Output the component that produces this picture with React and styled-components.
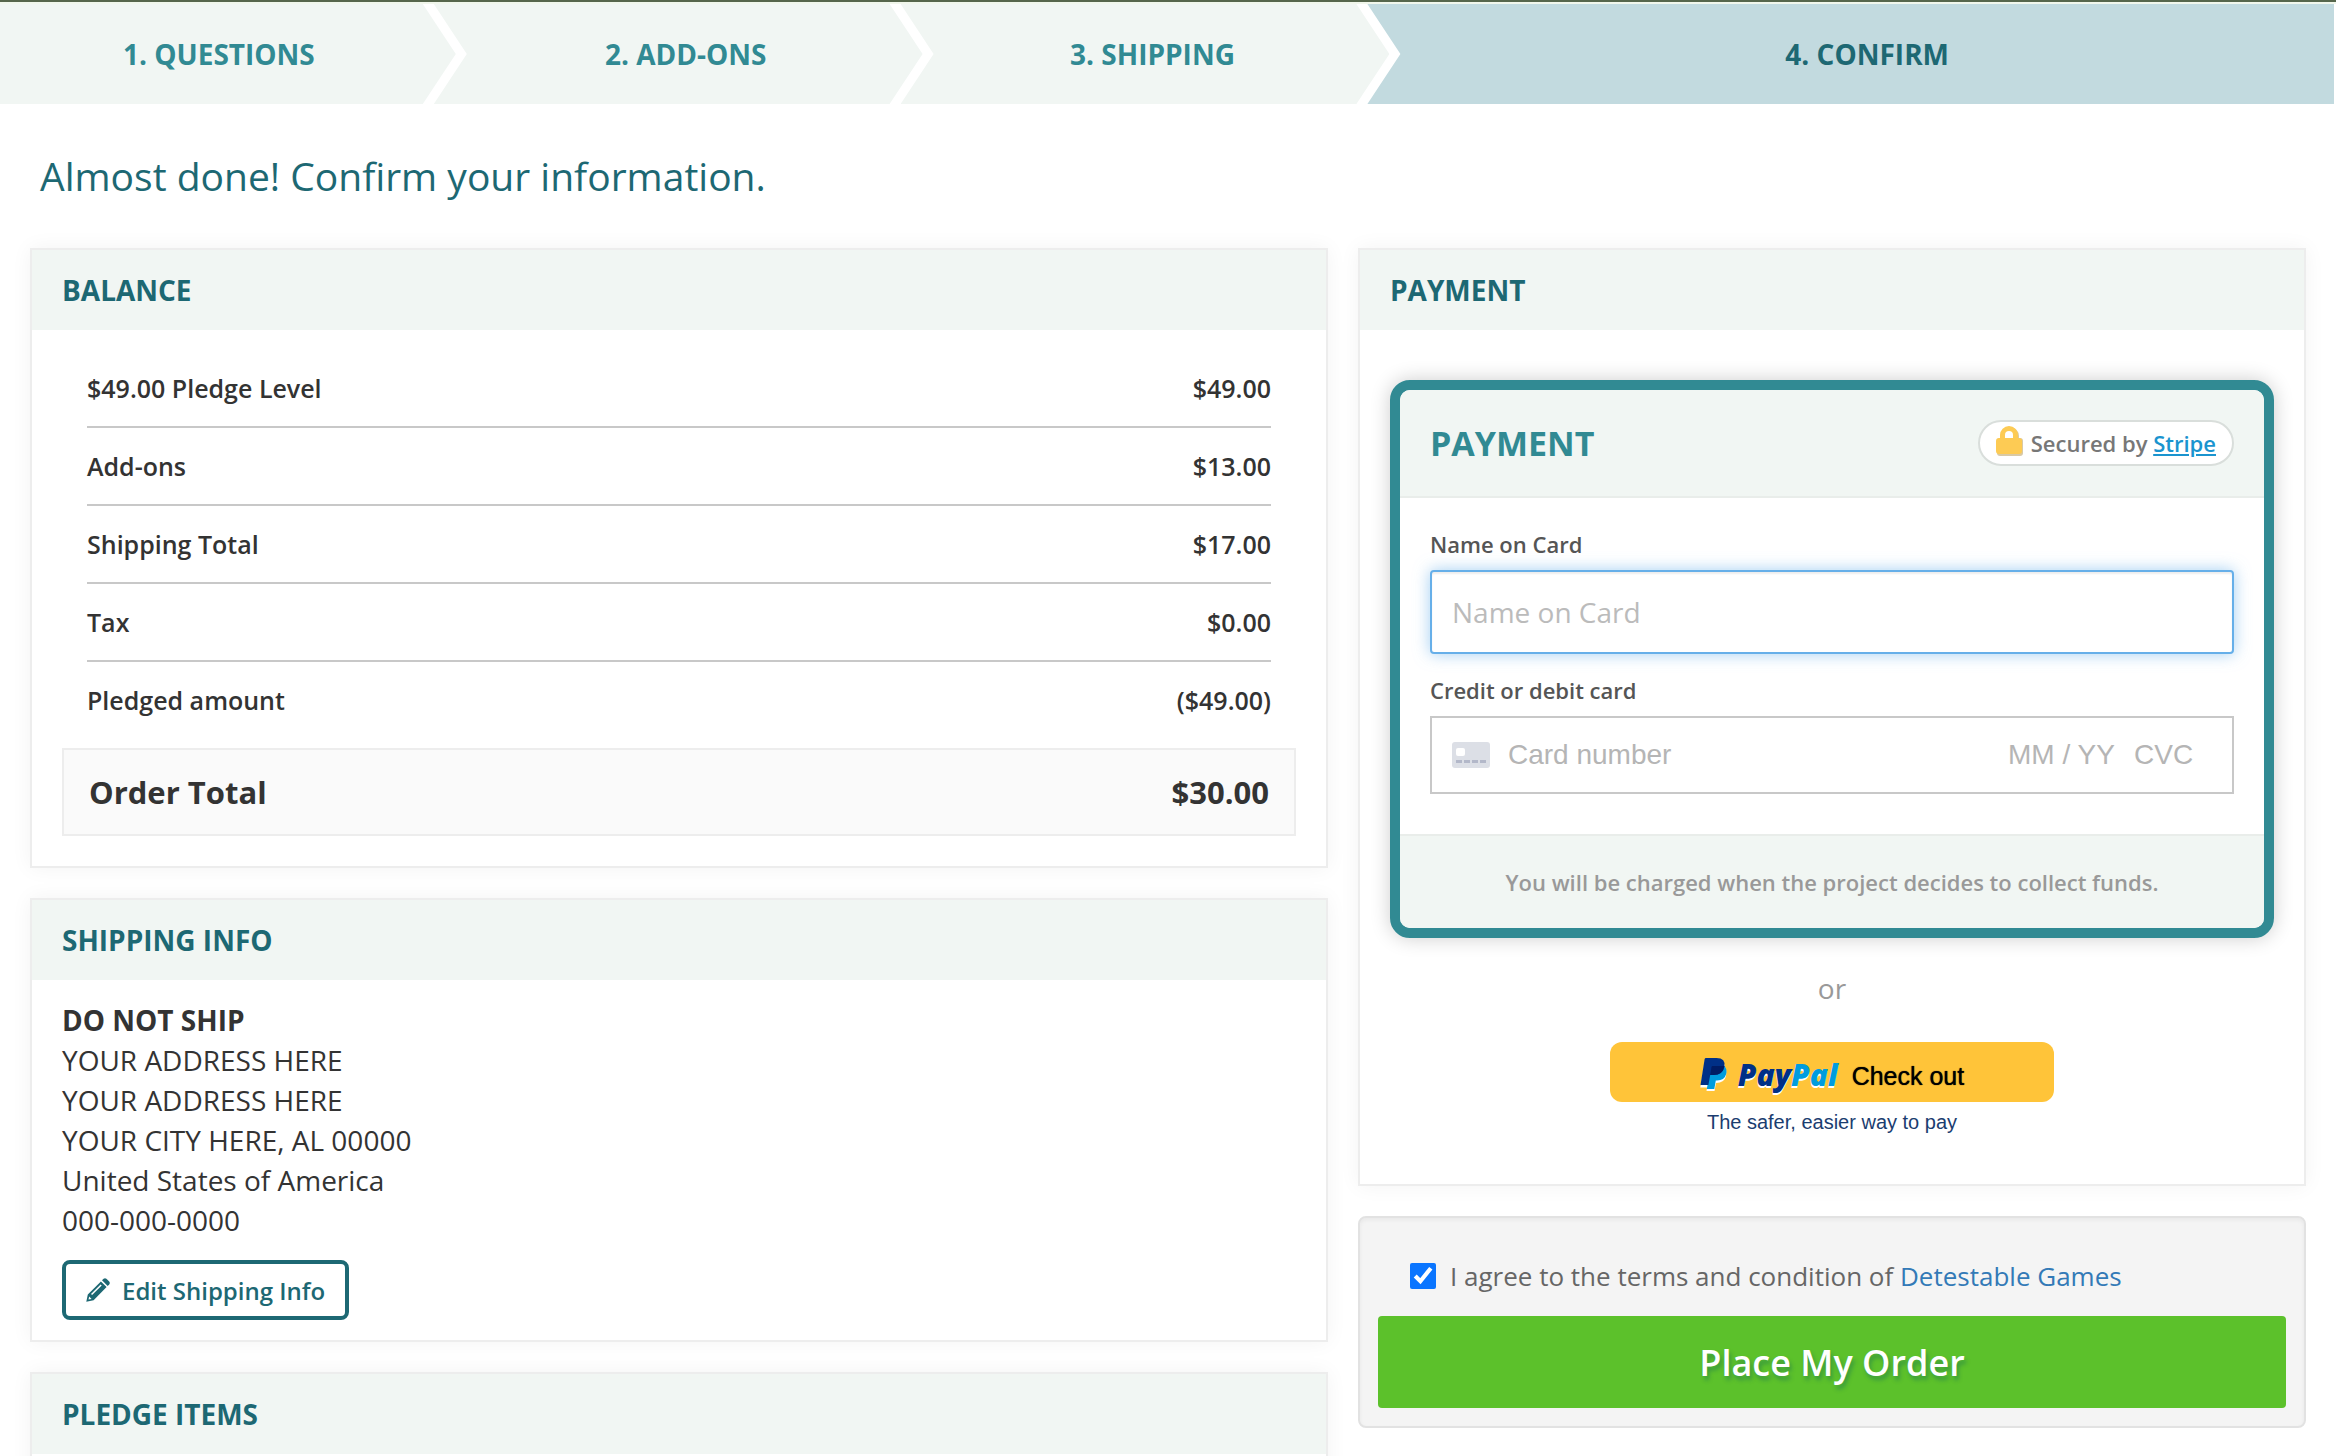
import React from 'react';
import styled, { createGlobalStyle, css } from 'styled-components';

const App = () => {
  return (
    <Page>
      <GlobalStyle />
      <Steps>
        {StepData.map((val, i) => (
          <Step key={i} $first={i === 0} $active={i === StepData.length - 1}>{val}</Step>
        ))}
      </Steps>
      <PageTitle>Almost done! Confirm your information.</PageTitle>
      <Columns>
        <Column>
          <Balance />
          <ShippingInfo />
          <Card>
            <CardHeader>Pledge Items</CardHeader>
            <CardBody />
          </Card>
        </Column>
        <Column>
          <Payment />
          <Terms />
        </Column>
      </Columns>
    </Page>
  );
}

const Balance = () => {
  return (
    <Card>
      <CardHeader>Balance</CardHeader>
      <BalanceBody>
        <BalanceTable>
          <tbody>
            {BalanceData.map((val, i) => (
              <tr key={i}>
                <th scope="row">{val.title}</th>
                <td>{val.amount}</td>
              </tr>
            ))}
          </tbody>
        </BalanceTable>
        <OrderTotal>
          <span>Order Total</span>
          <span>$30.00</span>
        </OrderTotal>
      </BalanceBody>
    </Card>
  );
}

const ShippingInfo = () => {
  return (
    <Card>
      <CardHeader>Shipping Info</CardHeader>
      <CardBody>
        <Address>
          <strong>DO NOT SHIP</strong>
          {AddressData.map((val, i) => <span key={i}>{val}</span>)}
        </Address>
        <EditButton type="button">
          <PencilIcon />
          Edit Shipping Info
        </EditButton>
      </CardBody>
    </Card>
  );
}

const Payment = () => {
  return (
    <Card>
      <CardHeader>Payment</CardHeader>
      <PaymentBody>
        <PaymentPanel>
          <PanelHeader>
            <h3>PAYMENT</h3>
            <SecureBadge>
              <LockIcon />
              <span>Secured by <a href="#stripe">Stripe</a></span>
            </SecureBadge>
          </PanelHeader>
          <PanelFields>
            <FieldLabel htmlFor="card-name">Name on Card</FieldLabel>
            <NameInput id="card-name" type="text" placeholder="Name on Card" />
            <FieldLabel htmlFor="card-number">Credit or debit card</FieldLabel>
            <CardField>
              <CreditCardIcon />
              <NumberInput id="card-number" type="text" placeholder="Card number" />
              <ExpiryInput type="text" placeholder="MM / YY" aria-label="Expiry date" />
              <CvcInput type="text" placeholder="CVC" aria-label="CVC" />
            </CardField>
          </PanelFields>
          <PanelFooter>You will be charged when the project decides to collect funds.</PanelFooter>
        </PaymentPanel>
        <Or>or</Or>
        <PaypalButton type="button">
          <PaypalMark />
          <PaypalWord>Pay<em>Pal</em></PaypalWord>
          <CheckOut>Check out</CheckOut>
        </PaypalButton>
        <PaypalNote>The safer, easier way to pay</PaypalNote>
      </PaymentBody>
    </Card>
  );
}

const Terms = () => {
  return (
    <TermsBox>
      <TermsRow>
        <TermsCheck id="terms" type="checkbox" defaultChecked />
        <label htmlFor="terms">
          I agree to the terms and condition of <a href="#terms">Detestable Games</a>
        </label>
      </TermsRow>
      <OrderButton type="button">Place My Order</OrderButton>
    </TermsBox>
  );
}

//icons

const PencilIcon = () => (
  <svg width="24" height="24" viewBox="0 0 24 24" fill="currentColor" aria-hidden="true">
    <path d="M16 2.3 L17.6 0.8 Q19 -0.4 20.4 0.8 L23.2 3.6 Q24.4 5 23.2 6.4 L21.7 8 Z" />
    <path fillRule="evenodd" d="M14.9 3.4 L20.6 9.1 L7.6 22.2 L0.3 23.8 L1.8 16.4 Z M14.6 6.4 L5 16 L6.1 17.1 L15.7 7.5 Z M3.2 18.4 L2.5 21.6 L5.6 20.9 Z" />
  </svg>
);

const LockIcon = () => (
  <svg width="27" height="30" viewBox="0 0 27 30" aria-hidden="true">
    <g fill="#d9c9a4" transform="translate(1 1)">
      <path d="M4 12 V9 A9 9 0 0 1 22 9 V12 Z" />
      <rect x="0" y="11" width="26" height="18" rx="3" />
    </g>
    <path fill="#fdcb54" d="M4 12 V9 A9 9 0 0 1 22 9 V12 H23 Q26 12 26 15 V25 Q26 28 23 28 H3 Q0 28 0 25 V15 Q0 12 3 12 Z" />
    <path fill="#fff" d="M9 12 V9 A4 4 0 0 1 17 9 V12 Z" />
  </svg>
);

const CreditCardIcon = () => (
  <svg width="38" height="26" viewBox="0 0 38 26" aria-hidden="true">
    <rect width="38" height="26" rx="3" fill="#dcdfe6" />
    <rect x="4" y="6" width="9" height="8" rx="2" fill="#fff" />
    <path stroke="#b3b8c9" strokeWidth="3" strokeDasharray="6 2" d="M4 19.5 H34" />
  </svg>
);

const PaypalMark = () => (
  <svg width="28" height="40" viewBox="0 0 28 40" aria-hidden="true">
    <g transform="translate(0 5)">
      <path fill="#fff" d="M5 3 H17 Q24 3 25 10 Q27 13 26 19 Q24.500 26 16 26 L14.500 34 H6.500 L7 30.500 H0.300 Z" />
      <path fill="#009cde" d="M11 9 H24.500 Q27.300 12 26.200 17 Q24.500 23.500 17 23.500 H15.800 L14.300 32 H6.800 Z" />
      <path fill="#003087" d="M6 1 H16.500 Q26 1 24.400 10 Q22.500 18 13.500 18 H10.200 L8.400 28 H0.500 L4.600 2.200 Q4.800 1 6 1 Z" />
      <path fill="#001c64" d="M12.500 9 H24.400 Q23 18 13.500 18 H10.200 L11.500 10 Q11.700 9 12.500 9 Z" />
    </g>
  </svg>
);

//style

const GlobalStyle = createGlobalStyle`
  * {
    box-sizing: border-box;
  }
  body {
    margin: 0;
    background-color: #fff;
    color: #333;
    font-family: "Open Sans", "Liberation Sans", sans-serif;
    font-size: 28px;
    line-height: 40px;
  }
  a {
    color: #337ab7;
    text-decoration: none;
  }
  button, input {
    font-family: inherit;
  }
`;

const Page = styled.main`
  height: 100vh;
  overflow: hidden;
  border-top: 2px solid #56664c;
`;

const Steps = styled.ol`
  display: flex;
  margin: 0;
  padding: 0 2px 0 0;
  border-top: 2px solid #f1f7ec;
  list-style: none;
`;

const Step = styled.li`
  flex: 0 0 calc(20% + 22px);
  height: 100px;
  margin-left: -22px;
  padding: 0 18px 0 33px;
  background-color: #f1f6f3;
  color: #318a93;
  font-weight: 700;
  line-height: 100px;
  text-align: center;
  text-transform: uppercase;
  clip-path: polygon(0 0, calc(100% - 33px) 0, 100% 50%, calc(100% - 33px) 100%, 0 100%, 33px 50%);
  ${(props) => props.$first && css`
    flex-basis: calc(20% - 11px);
    margin-left: 0;
    padding-left: 0;
    clip-path: polygon(0 0, calc(100% - 33px) 0, 100% 50%, calc(100% - 33px) 100%, 0 100%);
  `}
  ${(props) => props.$active && css`
    flex: 1;
    padding-right: 0;
    background-color: #c2dadf;
    color: #1d6873;
    clip-path: polygon(0 0, 100% 0, 100% 100%, 0 100%, 33px 50%);
  `}
`;

const PageTitle = styled.h1`
  margin: 45px 40px;
  color: #1d6873;
  font-size: 39px;
  font-weight: 400;
  line-height: 54px;
`;

const Columns = styled.div`
  display: grid;
  grid-template-columns: 649fr 474fr;
  gap: 30px;
  align-items: start;
  padding: 0 30px;
`;

const Column = styled.div`
  display: grid;
  gap: 30px;
`;

const Card = styled.section`
  border: 2px solid #ededed;
  background-color: #fff;
  box-shadow: 0 0 20px rgba(0, 0, 0, 0.05);
`;

const CardHeader = styled.h2`
  margin: 0;
  padding: 20px 30px;
  background-color: #f1f6f3;
  color: #1d6873;
  font-size: 28px;
  font-weight: 700;
  line-height: 40px;
  text-transform: uppercase;
`;

const CardBody = styled.div`
  padding: 20px 30px;
`;

const BalanceBody = styled(CardBody)`
  padding-bottom: 30px;
`;

const BalanceTable = styled.table`
  width: calc(100% - 50px);
  margin: 0 25px;
  border-collapse: separate;
  border-spacing: 0;
  font-size: 25px;
  th, td {
    height: 78px;
    padding: 0;
    border-bottom: 2px solid #c8c8c8;
    font-weight: 600;
    text-align: left;
  }
  td {
    text-align: right;
  }
  tr:last-child th, tr:last-child td {
    height: 76px;
    border-bottom: none;
  }
`;

const OrderTotal = styled.div`
  display: flex;
  justify-content: space-between;
  margin-top: 10px;
  padding: 22px 25px;
  border: 2px solid #ededed;
  background-color: #fafafa;
  font-size: 31px;
  font-weight: 700;
`;

const Address = styled.address`
  display: flex;
  flex-direction: column;
  font-style: normal;
`;

const EditButton = styled.button`
  display: flex;
  align-items: center;
  gap: 12px;
  height: 60px;
  margin-top: 20px;
  padding: 0 20px;
  border: 4px solid #1d6873;
  border-radius: 8px;
  background-color: #fff;
  color: #1d6873;
  font-size: 24px;
  font-weight: 600;
`;

const PaymentBody = styled.div`
  display: flex;
  flex-direction: column;
  align-items: center;
  padding: 50px 30px 48px;
`;

const PaymentPanel = styled.div`
  width: 100%;
  border: 10px solid #318a93;
  border-radius: 20px;
  box-shadow: 0 0 20px rgba(0, 0, 0, 0.2);
  overflow: hidden;
`;

const PanelHeader = styled.div`
  display: flex;
  align-items: center;
  justify-content: space-between;
  padding: 30px;
  border-bottom: 2px solid #e9edea;
  background-color: #f1f6f3;
  h3 {
    margin: 0;
    color: #318a93;
    font-size: 34px;
    line-height: 46px;
  }
`;

const SecureBadge = styled.div`
  display: flex;
  align-items: center;
  gap: 8px;
  height: 46px;
  padding: 0 16px;
  border: 2px solid #d9dedb;
  border-radius: 23px;
  background-color: #fff;
  color: #777;
  font-size: 22px;
  font-weight: 600;
  svg {
    margin-bottom: 4px;
  }
  a {
    color: #1a94cf;
    text-decoration: underline;
  }
`;

const PanelFields = styled.div`
  padding: 30px 30px 40px;
`;

const FieldLabel = styled.label`
  display: block;
  margin-bottom: 10px;
  color: #555;
  font-size: 22px;
  font-weight: 600;
  line-height: 32px;
`;

const NameInput = styled.input`
  display: block;
  width: 100%;
  height: 84px;
  margin-bottom: 20px;
  padding: 0 20px;
  border: 2px solid #66afe9;
  border-radius: 4px;
  box-shadow: inset 0 2px 2px rgba(0, 0, 0, 0.07), 0 0 16px rgba(102, 175, 233, 0.6);
  font-size: 28px;
  outline: none;
  &::placeholder {
    color: #bbb;
  }
`;

const CardField = styled.div`
  display: flex;
  align-items: center;
  height: 78px;
  padding: 0 38px 0 20px;
  border: 2px solid #c8c8c8;
`;

const CardInput = styled.input`
  height: 40px;
  padding: 0;
  border: none;
  background-color: transparent;
  font-family: "Liberation Sans", sans-serif;
  font-size: 28px;
  outline: none;
  &::placeholder {
    color: #b5b5b5;
  }
`;

const NumberInput = styled(CardInput)`
  flex: 1;
  min-width: 0;
  margin-left: 18px;
`;

const ExpiryInput = styled(CardInput)`
  width: 126px;
`;

const CvcInput = styled(CardInput)`
  width: 60px;
`;

const PanelFooter = styled.p`
  margin: 0;
  padding: 26px 30px;
  border-top: 2px solid #e9edea;
  background-color: #f1f6f3;
  color: #999;
  font-size: 22px;
  font-weight: 600;
  text-align: center;
`;

const Or = styled.div`
  margin: 30px 0 34px;
  color: #999;
`;

const PaypalButton = styled.button`
  display: flex;
  align-items: center;
  justify-content: center;
  width: 444px;
  height: 60px;
  padding: 0;
  border: none;
  border-radius: 12px;
  background-color: #ffc439;
`;

const PaypalWord = styled.span`
  margin: 0 14px 0 10px;
  padding-top: 4px;
  color: #003087;
  font-size: 30px;
  font-style: italic;
  font-weight: 800;
  text-shadow: 0 2px 0 #fff;
  em {
    color: #009cde;
  }
`;

const CheckOut = styled.span`
  padding-top: 8px;
  color: #000;
  font-family: "Liberation Sans", sans-serif;
  font-size: 25px;
  text-shadow: 0 0 1px #000;
`;

const PaypalNote = styled.div`
  margin-top: 6px;
  color: #1b3d70;
  font-family: "Liberation Sans", sans-serif;
  font-size: 20px;
  line-height: 28px;
`;

const TermsBox = styled.div`
  padding: 18px;
  border: 2px solid #e2e2e2;
  border-radius: 8px;
  background-color: #f4f4f4;
  box-shadow: inset 0 2px 4px rgba(0, 0, 0, 0.05);
`;

const TermsRow = styled.div`
  display: flex;
  align-items: center;
  gap: 14px;
  padding: 20px 32px;
  color: #666;
  font-size: 26px;
`;

const TermsCheck = styled.input`
  width: 26px;
  height: 26px;
  margin: 0;
  accent-color: #0a75ff;
`;

const OrderButton = styled.button`
  display: block;
  width: 100%;
  height: 92px;
  border: none;
  border-radius: 4px;
  background-color: #5cc12b;
  color: #fff;
  font-size: 36px;
  font-weight: 600;
  text-shadow: 2px 4px 4px rgba(0, 90, 90, 0.4);
`;

//data

const StepData = ["1. Questions", "2. Add-ons", "3. Shipping", "4. Confirm"];

const BalanceData = [
  { title: "$49.00 Pledge Level", amount: "$49.00" },
  { title: "Add-ons", amount: "$13.00" },
  { title: "Shipping Total", amount: "$17.00" },
  { title: "Tax", amount: "$0.00" },
  { title: "Pledged amount", amount: "($49.00)" }
];

const AddressData = [
  "YOUR ADDRESS HERE",
  "YOUR ADDRESS HERE",
  "YOUR CITY HERE, AL 00000",
  "United States of America",
  "000-000-0000"
];

export default App;
